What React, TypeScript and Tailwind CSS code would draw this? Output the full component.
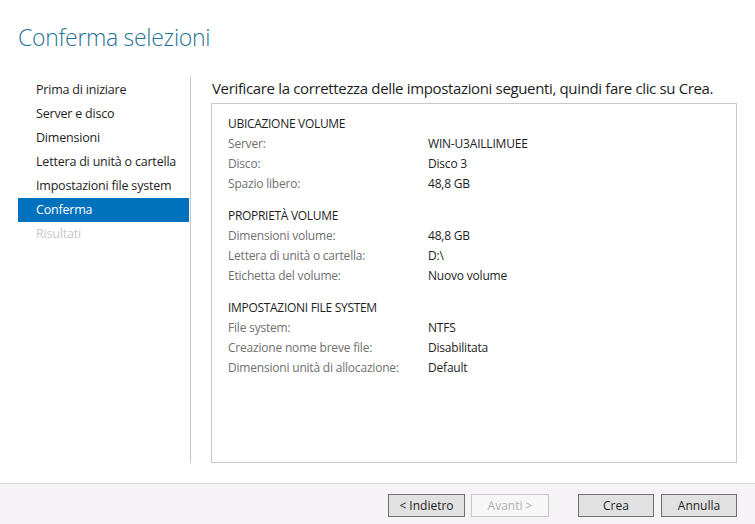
import React from "react";

const nav = [
  "Prima di iniziare",
  "Server e disco",
  "Dimensioni",
  "Lettera di unità o cartella",
  "Impostazioni file system",
  "Conferma",
  "Risultati",
];

const sections: { title: string; rows: [string, string][] }[] = [
  {
    title: "UBICAZIONE VOLUME",
    rows: [
      ["Server:", "WIN-U3AILLIMUEE"],
      ["Disco:", "Disco 3"],
      ["Spazio libero:", "48,8 GB"],
    ],
  },
  {
    title: "PROPRIETÀ VOLUME",
    rows: [
      ["Dimensioni volume:", "48,8 GB"],
      ["Lettera di unità o cartella:", "D:\\"],
      ["Etichetta del volume:", "Nuovo volume"],
    ],
  },
  {
    title: "IMPOSTAZIONI FILE SYSTEM",
    rows: [
      ["File system:", "NTFS"],
      ["Creazione nome breve file:", "Disabilitata"],
      ["Dimensioni unità di allocazione:", "Default"],
    ],
  },
];

export default function App() {
  return (
    <div
      className="w-[755px] h-[524px] bg-white flex flex-col overflow-hidden text-[#1e1e1e]"
      style={{ fontFamily: '"Open Sans", "Noto Sans", sans-serif' }}
    >
      <div className="pl-[18px] pt-[21px] h-[76px]">
        <h1 className="text-[23px] leading-[32px] font-light text-[#1f7396] tracking-[-0.3px]">
          Conferma selezioni
        </h1>
      </div>
      <div className="flex h-[407px]">
        <div className="ml-[18px] w-[173px] border-r border-[#c8c8c8] pt-[2px] h-[387px]">
          {nav.map((n) => {
            const sel = n === "Conferma";
            const dis = n === "Risultati";
            return (
              <div
                key={n}
                className={
                  "h-6 leading-6 pl-[18px] mr-px text-[12.5px] tracking-[-0.2px] " +
                  (sel ? "bg-[#0071bc] text-white" : dis ? "text-[#c9c9c9]" : "text-[#1e1e1e]")
                }
              >
                {n}
              </div>
            );
          })}
        </div>
        <div className="pl-[21px] flex flex-col">
          <div className="pt-[2px] h-[27px] leading-5 text-[15px] text-[#1e1e1e] tracking-[-0.35px]">
            Verificare la correttezza delle impostazioni seguenti, quindi fare clic su Crea.
          </div>
          <div className="-ml-px w-[526px] h-[360px] border border-[#c8c8c8] pl-[16px] pt-[10px]">
            {sections.map((s, i) => (
              <div key={s.title} className={i > 0 ? "mt-3" : ""}>
                <div className="h-5 leading-5 text-[12px] text-[#1e1e1e] tracking-[-0.3px]">{s.title}</div>
                {s.rows.map(([k, v]) => (
                  <div key={k} className="flex h-5 leading-5 text-[12px] tracking-[-0.2px]">
                    <div className="w-[200px] text-[#707070]">{k}</div>
                    <div className="text-[#1e1e1e]">{v}</div>
                  </div>
                ))}
              </div>
            ))}
          </div>
        </div>
      </div>
      <div className="flex-1 border-t border-[#dcdcdc] bg-[#f5f3f5] flex justify-end items-start pt-[10px] pr-[18px] text-[12px]">
        <button className="w-[77px] h-[23px] border border-[#707070] bg-[#e1e1e1] text-[#1e1e1e]">
          &lt; Indietro
        </button>
        <button className="ml-[6px] w-[78px] h-[23px] border border-[#c8c8c8] bg-[#f7f7f7] text-[#b0b0b0]">
          Avanti &gt;
        </button>
        <button className="ml-[29px] w-[76px] h-[23px] border border-[#707070] bg-[#e1e1e1] text-[#1e1e1e]">
          Crea
        </button>
        <button className="ml-[7px] w-[76px] h-[23px] border border-[#707070] bg-[#e1e1e1] text-[#1e1e1e]">
          Annulla
        </button>
      </div>
    </div>
  );
}
